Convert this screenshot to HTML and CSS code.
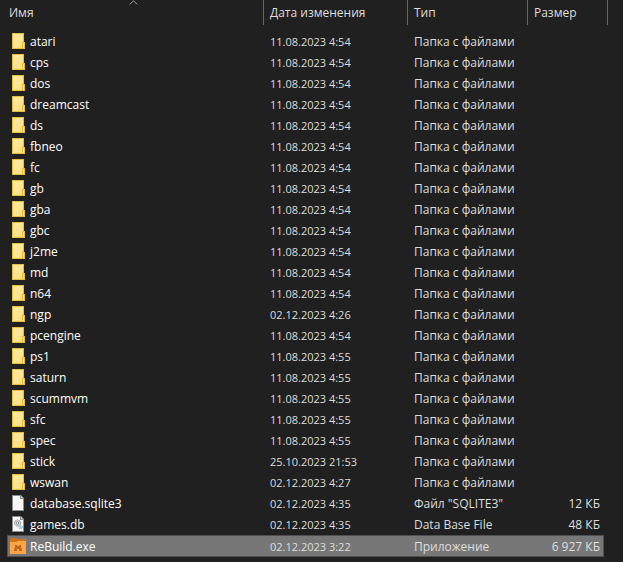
FILE: index.html
```html
<!DOCTYPE html>
<html lang="ru">
<head>
<meta charset="utf-8">
<title>ReBuild</title>
<link rel="stylesheet" href="styles.css">
</head>
<body>
<svg class="sprite" aria-hidden="true">
  <defs>
    <linearGradient id="fold" x1="0" y1="0" x2="1" y2="1">
      <stop offset="0" stop-color="#ffeca6"/><stop offset="1" stop-color="#ffdf7c"/>
    </linearGradient>
    <symbol id="folder" viewBox="0 0 16 16">
      <path fill="#e8bd3c" d="M2 0h12v9h1v7H2z"/>
      <path fill="url(#fold)" d="M3 1h10v8h-1v6H3z"/>
      <path fill="#ffe48a" d="M13 10h1v5h-1z"/>
    </symbol>
    <symbol id="page" viewBox="0 0 16 16">
      <path fill="#8c8c8c" d="M2 0h9l3 3v13H2z"/>
      <path fill="#f7f7f7" d="M3 1h7v3h3v11H3z"/>
      <path fill="#d2d2d2" d="M11 1l2 2h-2z"/>
    </symbol>
    <symbol id="gears" viewBox="0 0 16 16">
      <path fill="#8c8c8c" d="M2 0h9l3 3v13H2z"/>
      <path fill="#f7f7f7" d="M3 1h7v3h3v11H3z"/>
      <path fill="#d2d2d2" d="M11 1l2 2h-2z"/>
      <circle cx="7.5" cy="7" r="3" fill="#dfe3e6" stroke="#7f878d" stroke-dasharray="1.5 .7"/>
      <circle cx="7.5" cy="7" r="1.3" fill="#fff" stroke="#70787e" stroke-width=".9"/>
      <circle cx="10.8" cy="11.2" r="1.8" fill="#d6ebf7" stroke="#7fb2d0" stroke-dasharray="1.2 .5"/>
      <circle cx="10.8" cy="11.2" r=".6" fill="#6ba4c6"/>
    </symbol>
    <symbol id="app" viewBox="0 0 16 16">
      <path fill="#c97520" d="M0 0h6l1 1h9v5H0z"/>
      <path fill="#ffa443" d="M0 4h6l2-1h8v13H0z"/>
      <path fill="#b96a22" d="M5 7h2v1h2V7h2v2l1 3v1H9v-2H7v2H4v-1l1-3z"/>
    </symbol>
  </defs>
</svg>
<main>
<table class="files">
  <colgroup><col><col class="c-date"><col class="c-type"><col class="c-size"><col class="c-end"></colgroup>
  <thead>
    <tr>
      <th class="sorted" aria-sort="ascending">Имя<svg class="arrow" viewBox="0 0 9 5" aria-hidden="true"><path d="M.7 4.5l3.8-3.8 3.8 3.8"/></svg></th>
      <th>Дата изменения</th><th>Тип</th><th colspan="2">Размер</th>
    </tr>
  </thead>
  <tbody>
    <tr><td><svg><use href="#folder"/></svg>atari</td><td class="date">11.08.2023 4:54</td><td>Папка с файлами</td><td></td><td></td></tr>
    <tr><td><svg><use href="#folder"/></svg>cps</td><td class="date">11.08.2023 4:54</td><td>Папка с файлами</td><td></td><td></td></tr>
    <tr><td><svg><use href="#folder"/></svg>dos</td><td class="date">11.08.2023 4:54</td><td>Папка с файлами</td><td></td><td></td></tr>
    <tr><td><svg><use href="#folder"/></svg>dreamcast</td><td class="date">11.08.2023 4:54</td><td>Папка с файлами</td><td></td><td></td></tr>
    <tr><td><svg><use href="#folder"/></svg>ds</td><td class="date">11.08.2023 4:54</td><td>Папка с файлами</td><td></td><td></td></tr>
    <tr><td><svg><use href="#folder"/></svg>fbneo</td><td class="date">11.08.2023 4:54</td><td>Папка с файлами</td><td></td><td></td></tr>
    <tr><td><svg><use href="#folder"/></svg>fc</td><td class="date">11.08.2023 4:54</td><td>Папка с файлами</td><td></td><td></td></tr>
    <tr><td><svg><use href="#folder"/></svg>gb</td><td class="date">11.08.2023 4:54</td><td>Папка с файлами</td><td></td><td></td></tr>
    <tr><td><svg><use href="#folder"/></svg>gba</td><td class="date">11.08.2023 4:54</td><td>Папка с файлами</td><td></td><td></td></tr>
    <tr><td><svg><use href="#folder"/></svg>gbc</td><td class="date">11.08.2023 4:54</td><td>Папка с файлами</td><td></td><td></td></tr>
    <tr><td><svg><use href="#folder"/></svg>j2me</td><td class="date">11.08.2023 4:54</td><td>Папка с файлами</td><td></td><td></td></tr>
    <tr><td><svg><use href="#folder"/></svg>md</td><td class="date">11.08.2023 4:54</td><td>Папка с файлами</td><td></td><td></td></tr>
    <tr><td><svg><use href="#folder"/></svg>n64</td><td class="date">11.08.2023 4:54</td><td>Папка с файлами</td><td></td><td></td></tr>
    <tr><td><svg><use href="#folder"/></svg>ngp</td><td class="date">02.12.2023 4:26</td><td>Папка с файлами</td><td></td><td></td></tr>
    <tr><td><svg><use href="#folder"/></svg>pcengine</td><td class="date">11.08.2023 4:54</td><td>Папка с файлами</td><td></td><td></td></tr>
    <tr><td><svg><use href="#folder"/></svg>ps1</td><td class="date">11.08.2023 4:55</td><td>Папка с файлами</td><td></td><td></td></tr>
    <tr><td><svg><use href="#folder"/></svg>saturn</td><td class="date">11.08.2023 4:55</td><td>Папка с файлами</td><td></td><td></td></tr>
    <tr><td><svg><use href="#folder"/></svg>scummvm</td><td class="date">11.08.2023 4:55</td><td>Папка с файлами</td><td></td><td></td></tr>
    <tr><td><svg><use href="#folder"/></svg>sfc</td><td class="date">11.08.2023 4:55</td><td>Папка с файлами</td><td></td><td></td></tr>
    <tr><td><svg><use href="#folder"/></svg>spec</td><td class="date">11.08.2023 4:55</td><td>Папка с файлами</td><td></td><td></td></tr>
    <tr><td><svg><use href="#folder"/></svg>stick</td><td class="date">25.10.2023 21:53</td><td>Папка с файлами</td><td></td><td></td></tr>
    <tr><td><svg><use href="#folder"/></svg>wswan</td><td class="date">02.12.2023 4:27</td><td>Папка с файлами</td><td></td><td></td></tr>
    <tr><td><svg><use href="#page"/></svg>database.sqlite3</td><td class="date">02.12.2023 4:35</td><td>Файл "SQLITE3"</td><td class="size">12 КБ</td><td></td></tr>
    <tr><td><svg><use href="#gears"/></svg>games.db</td><td class="date">02.12.2023 4:35</td><td>Data Base File</td><td class="size">48 КБ</td><td></td></tr>
    <tr class="selected" aria-selected="true"><td><svg><use href="#app"/></svg>ReBuild.exe</td><td class="date">02.12.2023 3:22</td><td>Приложение</td><td class="size">6 927 КБ</td><td></td></tr>
  </tbody>
</table>
</main>
</body>
</html>
```
FILE: styles.css
```css
* { box-sizing: border-box; }

body {
  margin: 0;
  background: #202020;
  color: #dedede;
  font: 12px/16px "Open Sans", "Noto Sans", sans-serif;
}

.sprite { position: absolute; width: 0; height: 0; }

main { padding: 0 15px 5px 7px; }

.files {
  width: 100%;
  table-layout: fixed;
  border-collapse: separate;
  border-spacing: 0;
}

.c-date { width: 144px; }
.c-type { width: 120px; }
.c-size { width: 76px; }
.c-end { width: 4px; }

th {
  height: 25px;
  padding: 0 6px;
  border-right: 1px solid #636363;
  font-weight: 400;
  text-align: left;
  white-space: nowrap;
}

.sorted { position: relative; padding-left: 2px; }

.arrow {
  position: absolute;
  top: 0;
  left: calc(50% - 6px);
  width: 9px;
  height: 5px;
  fill: none;
  stroke: #a0a0a0;
}

tbody::before { content: ""; display: block; height: 6px; }

td {
  height: 21px;
  padding: 1px 6px 0;
  border: 0 solid transparent;
  border-width: 1px 0;
  white-space: nowrap;
}

td:first-child { padding-left: 3px; color: #fff; }
td:last-child { padding: 0; }

td svg {
  width: 16px;
  height: 16px;
  margin: -1px 4px 0 0;
  vertical-align: top;
}

.date { font-size: 11px; }

.size { padding-right: 4px; text-align: right; }

.selected td { height: 22px; }

.selected td:not(:last-child) {
  background: #777;
  border-color: #505050;
}

.selected td:first-child { box-shadow: inset 1px 0 #505050; }
.selected .size { box-shadow: inset -1px 0 #505050; }
```
